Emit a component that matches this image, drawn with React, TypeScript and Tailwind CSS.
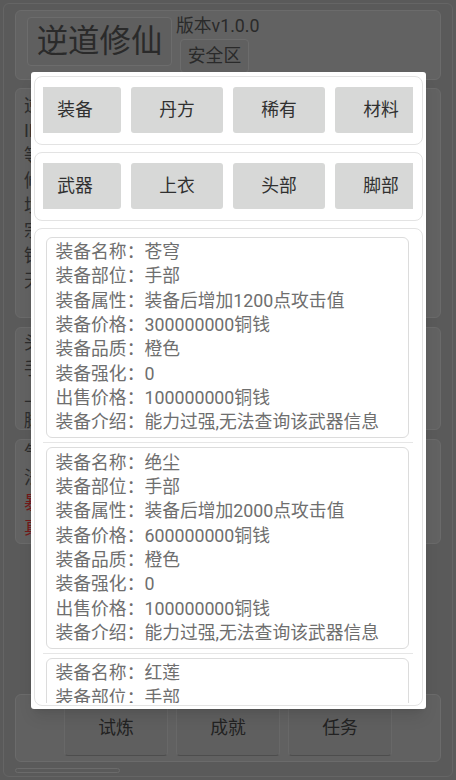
import React from 'react'

const font = "font-['Roboto','Noto_Sans_CJK_SC',sans-serif]"

const categories = ['装备', '丹方', '稀有', '材料']
const slots = ['武器', '上衣', '头部', '脚部']

const items = [
  { name: '苍穹', slot: '手部', attack: 1200, price: '300000000', quality: '橙色', level: 0, sell: '100000000' },
  { name: '绝尘', slot: '手部', attack: 2000, price: '600000000', quality: '橙色', level: 0, sell: '100000000' },
  { name: '红莲', slot: '手部', attack: 3000, price: '900000000', quality: '橙色', level: 0, sell: '100000000' },
]

function TabRow({ labels }: { labels: string[] }) {
  return (
    <div className="border border-[#e3e3e3] rounded-[8px] pl-[8px] pr-[9px] py-[10.5px]">
      <div className="overflow-hidden">
        <div className="flex gap-[10px] -ml-[13.5px]">
          {labels.map((l) => (
            <div
              key={l}
              className="w-[92px] h-[46px] shrink-0 bg-[#d7d8d7] rounded-[3px] flex items-center justify-center text-[17.8px] text-[#303030]"
            >
              {l}
            </div>
          ))}
        </div>
      </div>
    </div>
  )
}

function ItemCard({ item }: { item: (typeof items)[number] }) {
  const rows = [
    ['装备名称', item.name],
    ['装备部位', item.slot],
    ['装备属性', `装备后增加${item.attack}点攻击值`],
    ['装备价格', `${item.price}铜钱`],
    ['装备品质', item.quality],
    ['装备强化', String(item.level)],
    ['出售价格', `${item.sell}铜钱`],
    ['装备介绍', '能力过强,无法查询该武器信息'],
  ]
  return (
    <div className="border-b border-[#e6e6e6]">
      <div className="px-[3.7px] pt-[4.3px] pb-[4px]">
        <div className="border border-[#dcdcdc] rounded-[6px] pl-[8.3px] py-[2.5px] text-[17.8px] leading-[24.3px] text-[#6e6e6e] whitespace-nowrap">
          {rows.map(([k, v]) => (
            <div key={k}>
              {k}：{v}
            </div>
          ))}
        </div>
      </div>
    </div>
  )
}

function BgCard({ lines, className }: { lines: { t: string; red?: boolean }[]; className: string }) {
  return (
    <div className={`border border-[#d4d4d4] rounded-[6px] bg-[#c4c4c4] pl-[8px] text-[17.8px] text-[#585858] ${className}`}>
      {lines.map((l, i) => (
        <div key={i} className={l.red ? 'text-[#e83232]' : ''}>
          {l.t}
        </div>
      ))}
    </div>
  )
}

export default function App() {
  return (
    <div className={`relative w-[456px] h-[780px] overflow-hidden bg-[#b4b4b4] p-[3px] ${font}`}>
      {/* page behind the dialog */}
      <div className="h-full border border-[#cacaca] rounded-[6px] px-[11px] pt-[6px] pb-[3px] flex flex-col">
        <div className="h-[70px] shrink-0 border border-[#d6d6d6] rounded-[6px] bg-[#c4c4c4] flex pl-[11px] pt-[6px]">
          <div className="w-[145px] h-[49px] border border-[#d8d8d8] rounded-[4px] bg-[#bebebe] flex items-center justify-center text-[31.4px] text-[#555]">
            逆道修仙
          </div>
          <div className="ml-[4px] flex flex-col">
            <div className="text-[17.8px] leading-[24px] -mt-[3px] text-[#555]">版本v1.0.0</div>
            <div className="ml-[4px] mt-[1px] w-[69px] h-[34px] border border-[#d8d8d8] rounded-[4px] bg-[#c0c0c0] flex items-center justify-center text-[17.8px] text-[#555]">
              安全区
            </div>
          </div>
        </div>

        <BgCard
          className="mt-[8px] h-[230px] pt-[3.5px] leading-[25px]"
          lines={[
            { t: '逆道修仙' },
            { t: 'ID：10001' },
            { t: '等级：1' },
            { t: '修为：0' },
            { t: '境界：练气' },
            { t: '宗门：无' },
            { t: '铜钱：0' },
            { t: '天赋：无' },
          ]}
        />
        <BgCard
          className="mt-[9px] h-[103px] pt-[2px] leading-[26px]"
          lines={[{ t: '头部：无' }, { t: '手部：无' }, { t: '上衣：无' }, { t: '脚部：无' }]}
        />
        <BgCard
          className="mt-[9px] h-[105px] leading-[25px]"
          lines={[{ t: '气血：100' }, { t: '法力：100' }, { t: '暴击：0', red: true }, { t: '真伤：0', red: true }]}
        />

        <div className="mt-auto h-[68px] shrink-0 border border-[#d6d6d6] rounded-[6px] bg-[#c2c2c2] flex justify-center gap-[8px] pt-[5.5px]">
          {['试炼', '成就', '任务'].map((b) => (
            <div
              key={b}
              className="w-[104px] h-[55px] border border-[#d0d0d0] border-b-[#9a9a9a] rounded-[4px] bg-[#bebebe] flex items-center justify-center text-[17.8px] text-[#444]"
            >
              {b}
            </div>
          ))}
        </div>
        <div className="mt-[6px] w-[105px] h-[5px] rounded-full border border-[#d6d6d6]" />
      </div>

      {/* modal */}
      <div className="absolute inset-0 bg-black/50 flex items-center justify-center">
        <div className="w-[395px] h-[637px] bg-white rounded-[3px] px-[3px] pt-[4px] pb-[3px] flex flex-col shadow-lg">
          <TabRow labels={categories} />
          <div className="mt-[7.4px]">
            <TabRow labels={slots} />
          </div>
          <div className="mt-[7.4px] flex-1 min-h-0 border border-[#e3e3e3] rounded-[8px] pl-[8px] pr-[9px] pt-[3px] pb-[2px] flex flex-col">
            <div className="flex-1 min-h-0 overflow-hidden">
              {items.map((it) => (
                <ItemCard key={it.name} item={it} />
              ))}
            </div>
          </div>
        </div>
      </div>
    </div>
  )
}
